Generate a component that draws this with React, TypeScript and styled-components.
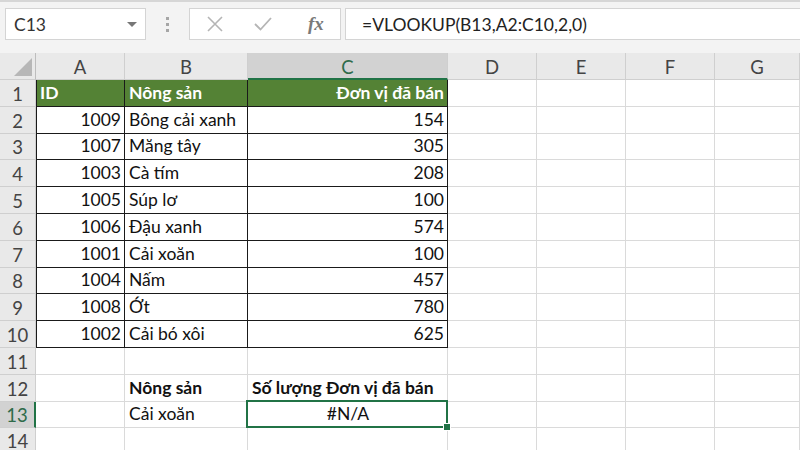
import React from 'react';
import styled, { createGlobalStyle, css } from 'styled-components';

const GlobalStyle = createGlobalStyle`
  html, body {
    margin: 0;
    padding: 0;
    background: #fff;
    overflow: hidden;
  }
  body {
    font-family: Lato, 'Noto Sans', 'Liberation Sans', sans-serif;
  }
`;

const GREEN = '#217346';

const Page = styled.div`
  width: 800px;
  height: 450px;
  display: flex;
  flex-direction: column;
  overflow: hidden;
  background: #fff;
`;

const FormulaBar = styled.div`
  height: 53px;
  flex: none;
  display: flex;
  align-items: flex-start;
  padding: 6px 0 0 5px;
  box-sizing: border-box;
  background: #f3f3f3;
  border-top: 2px solid #d6d6d6;
`;

const NameBox = styled.div`
  width: 141px;
  height: 32px;
  box-sizing: border-box;
  background: #fff;
  border: 1px solid #d4d4d4;
  display: flex;
  align-items: center;
  justify-content: space-between;
  padding: 0 8px 0 8px;
  font-size: 17.5px;
  color: #333;
`;

const DropArrow = styled.span`
  width: 0;
  height: 0;
  border-left: 5px solid transparent;
  border-right: 5px solid transparent;
  border-top: 5px solid #777;
`;

const Grip = styled.div`
  width: 43px;
  height: 32px;
  display: flex;
  flex-direction: column;
  align-items: center;
  justify-content: center;
  gap: 3px;

  span {
    width: 3px;
    height: 3px;
    background: #a6a6a6;
  }
`;

const FxBox = styled.div`
  width: 152px;
  height: 32px;
  box-sizing: border-box;
  background: #fff;
  border: 1px solid #d4d4d4;
  display: flex;
  align-items: center;
  padding-left: 16px;
  gap: 30px;
`;

const FxText = styled.span`
  font-family: 'Liberation Serif', 'DejaVu Serif', serif;
  font-style: italic;
  font-weight: bold;
  font-size: 19px;
  color: #7a7a7a;
  margin-left: 6px;
`;

const FormulaInput = styled.div`
  flex: 1;
  height: 32px;
  margin-left: 4px;
  box-sizing: border-box;
  background: #fff;
  border: 1px solid #d4d4d4;
  border-right: none;
  display: flex;
  align-items: center;
  padding-left: 16px;
  font-size: 17.5px;
  color: #222;
`;

const Sheet = styled.div`
  flex: 1;
  display: grid;
  grid-template-columns: 36px 89px 123px 200px 89px 89px 89px 85px;
  grid-template-rows: 27px repeat(13, 26.8px) 1fr;
`;

const headBase = css`
  background: #e9e9e9;
  color: #444;
  font-size: 18.5px;
  display: flex;
  align-items: center;
  justify-content: center;
  box-sizing: border-box;
  border-right: 1px solid #cfcfcf;
  border-bottom: 1px solid #cfcfcf;
`;

const Corner = styled.div`
  ${headBase};
  border-right: 1px solid #bdbdbd;
  justify-content: flex-end;
  align-items: flex-end;
  padding: 0 3px 3px 0;

  &::before {
    content: '';
    width: 0;
    height: 0;
    border-left: 18px solid transparent;
    border-bottom: 18px solid #b7b7b7;
  }
`;

const ColHead = styled.div<{ $active?: boolean }>`
  ${headBase};
  padding-top: 2px;
  ${(p) =>
    p.$active &&
    css`
      background: #d2d2d2;
      color: #2f6b4a;
      border-bottom: 2px solid ${GREEN};
    `}
`;

const RowHead = styled.div<{ $active?: boolean }>`
  ${headBase};
  padding-top: 2px;
  ${(p) =>
    p.$active &&
    css`
      background: #d2d2d2;
      color: #2f6b4a;
      border-right: 2px solid ${GREEN};
    `}
`;

type Align = 'left' | 'right' | 'center';

const Cell = styled.div<{
  $align?: Align;
  $bold?: boolean;
  $head?: boolean;
  $boxed?: boolean;
  $edge?: boolean;
  $selected?: boolean;
}>`
  position: relative;
  box-sizing: border-box;
  display: flex;
  align-items: flex-end;
  justify-content: ${(p) =>
    p.$align === 'right' ? 'flex-end' : p.$align === 'center' ? 'center' : 'flex-start'};
  padding: 0 3px 2px 4px;
  font-size: 17.5px;
  line-height: 22px;
  white-space: nowrap;
  color: ${(p) => (p.$head ? '#fff' : '#111')};
  font-weight: ${(p) => (p.$bold || p.$head ? 700 : 400)};
  background: ${(p) => (p.$head ? '#548235' : '#fff')};
  border-right: 1px solid ${(p) => (p.$boxed ? '#1a1a1a' : '#dadada')};
  border-bottom: 1px solid ${(p) => (p.$boxed ? '#1a1a1a' : '#dadada')};
  box-shadow: ${(p) => (p.$edge ? 'inset 1px 0 0 #1a1a1a' : 'none')};

  ${(p) =>
    p.$selected &&
    css`
      &::after {
        content: '';
        position: absolute;
        left: -2px;
        top: -2px;
        right: -1px;
        bottom: -1px;
        border: 2px solid ${GREEN};
        pointer-events: none;
      }
    `}
`;

const FillHandle = styled.span`
  position: absolute;
  right: -4px;
  bottom: -4px;
  width: 6px;
  height: 6px;
  background: ${GREEN};
  border: 1px solid #fff;
  z-index: 2;
`;

const columns = ['A', 'B', 'C', 'D', 'E', 'F', 'G'];

const data: [string, string, string][] = [
  ['1009', 'Bông cải xanh', '154'],
  ['1007', 'Măng tây', '305'],
  ['1003', 'Cà tím', '208'],
  ['1005', 'Súp lơ', '100'],
  ['1006', 'Đậu xanh', '574'],
  ['1001', 'Cải xoăn', '100'],
  ['1004', 'Nấm', '457'],
  ['1008', 'Ớt', '780'],
  ['1002', 'Cải bó xôi', '625'],
];

const Blank = ({ n }: { n: number }) => (
  <>
    {Array.from({ length: n }).map((_, i) => (
      <Cell key={i} />
    ))}
  </>
);

const CrossIcon = () => (
  <svg width="18" height="18" viewBox="0 0 18 18">
    <path d="M2 2 L16 16 M16 2 L2 16" stroke="#b5b5b5" strokeWidth="1.6" fill="none" />
  </svg>
);

const CheckIcon = () => (
  <svg width="18" height="16" viewBox="0 0 18 16">
    <path d="M1 8 L6.5 13.5 L17 2" stroke="#b5b5b5" strokeWidth="1.8" fill="none" />
  </svg>
);

const App = (): JSX.Element => {
  return (
    <Page>
      <GlobalStyle />
      <FormulaBar>
        <NameBox>
          C13
          <DropArrow />
        </NameBox>
        <Grip>
          <span />
          <span />
          <span />
        </Grip>
        <FxBox>
          <CrossIcon />
          <CheckIcon />
          <FxText>fx</FxText>
        </FxBox>
        <FormulaInput>=VLOOKUP(B13,A2:C10,2,0)</FormulaInput>
      </FormulaBar>

      <Sheet>
        <Corner />
        {columns.map((c) => (
          <ColHead key={c} $active={c === 'C'}>
            {c}
          </ColHead>
        ))}

        <RowHead>1</RowHead>
        <Cell $head $boxed $edge>
          ID
        </Cell>
        <Cell $head $boxed>
          Nông sản
        </Cell>
        <Cell $head $boxed $align="right">
          Đơn vị đã bán
        </Cell>
        <Blank n={4} />

        {data.map(([id, name, qty], i) => (
          <React.Fragment key={id}>
            <RowHead>{i + 2}</RowHead>
            <Cell $boxed $edge $align="right">
              {id}
            </Cell>
            <Cell $boxed>{name}</Cell>
            <Cell $boxed $align="right">
              {qty}
            </Cell>
            <Blank n={4} />
          </React.Fragment>
        ))}

        <RowHead>11</RowHead>
        <Blank n={7} />

        <RowHead>12</RowHead>
        <Cell />
        <Cell $bold>Nông sản</Cell>
        <Cell $bold>Số lượng Đơn vị đã bán</Cell>
        <Blank n={4} />

        <RowHead $active>13</RowHead>
        <Cell />
        <Cell>Cải xoăn</Cell>
        <Cell $selected $align="center">
          #N/A
          <FillHandle />
        </Cell>
        <Blank n={4} />

        <RowHead>14</RowHead>
        <Blank n={7} />
      </Sheet>
    </Page>
  );
};

export default App;
